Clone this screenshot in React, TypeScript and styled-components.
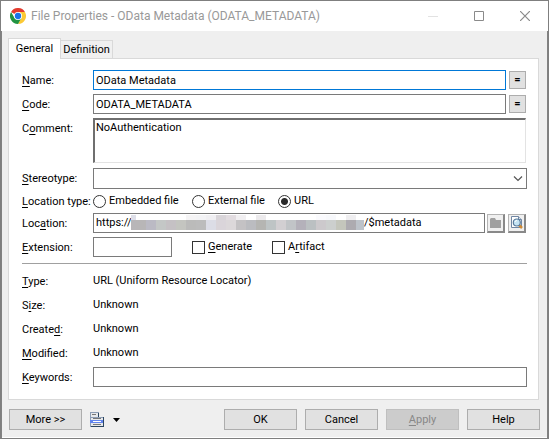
import React from "react";
import styled, { createGlobalStyle, css } from "styled-components";

const GlobalStyle = createGlobalStyle`
  *, *::before, *::after { box-sizing: border-box; }
  body { margin: 0; background: #fff; }
  body, button, input, textarea, select {
    font-family: Roboto, "Liberation Sans", sans-serif;
    font-size: 11px;
    line-height: 16px;
    color: #000;
  }
  u { text-underline-offset: 2px; text-decoration-skip-ink: none; }
`;

const Window = styled.main`
  display: flex;
  flex-direction: column;
  min-height: 100vh;
  border: 1px solid #7f7f7f;
  background: #efefef;
`;

const TitleBar = styled.header`
  display: flex;
  align-items: center;
  height: 30px;
  padding-left: 9px;
  gap: 5px;
  background: #fff;
`;

const Title = styled.h1`
  flex: 1;
  margin: 0;
  font: 400 12px/20px Roboto, "Open Sans", sans-serif;
  color: #999;
  white-space: nowrap;
`;

const CaptionButton = styled.button`
  display: grid;
  place-items: center;
  width: 46px;
  height: 28px;
  padding: 0;
  border: 0;
  background: none;
  color: #8a8a8a;
  &:disabled { color: #e2e2e2; }
`;

const CaptionButtons = styled.div`
  display: flex;
`;

const Body = styled.div`
  flex: 1;
  padding: 7px 8px 7px 6px;
  border: solid #828282;
  border-width: 0 1px;
  box-shadow: inset 0 -1px #fff;
`;

const TabList = styled.div`
  display: flex;
  align-items: flex-end;
`;

const Tab = styled.button<{ $active?: boolean }>`
  width: 52px;
  height: 18px;
  padding: 1px 0 0;
  border: 1px solid #d9d9d9;
  border-left-width: 0;
  border-bottom: 0;
  background: #f0f0f0;
  ${(p) =>
    p.$active &&
    css`
      position: relative;
      width: 53px;
      height: 21px;
      padding: 0;
      border-left-width: 1px;
      margin-bottom: -1px;
      background: #fff;
    `}
`;

const Panel = styled.form`
  padding: 11px 11px 12px 13px;
  border: 1px solid #d9d9d9;
  background: #fff;
`;

const Stack = styled.div`
  display: flex;
  flex-direction: column;
  gap: 4px;
`;

const Row = styled.div<{ $top?: boolean }>`
  display: grid;
  grid-template-columns: 71px minmax(0, 1fr);
  align-items: ${(p) => (p.$top ? "start" : "center")};
`;

const Label = styled.label<{ $lowered?: boolean }>`
  padding-top: ${(p) => (p.$lowered ? "4px" : "2px")};
  line-height: 14px;
  white-space: nowrap;
`;

const Controls = styled.div`
  display: flex;
  align-items: center;
  gap: 3px;
  padding-right: 1px;
`;

const TextInput = styled.input<{ $focused?: boolean }>`
  flex: 1;
  width: 100%;
  min-width: 0;
  height: 20px;
  padding: 0 2px;
  border: 1px solid ${(p) => (p.$focused ? "#0078d7" : "#7a7a7a")};
  background: #fff;
  outline: 0;
`;

const CommentBox = styled.textarea`
  display: block;
  flex: 1;
  height: 45px;
  padding: 0 1px;
  border: solid;
  border-width: 2px 1px 1px 2px;
  border-color: #6f6f6f #e3e3e3 #e3e3e3 #6f6f6f;
  resize: none;
  outline: 0;
`;

const EqualsButton = styled.button`
  width: 17px;
  height: 18px;
  padding: 0;
  border: 1px solid #adadad;
  background: #e1e1e1;
  font-weight: 700;
`;

const SelectBox = styled.div`
  position: relative;
  margin-top: 1px;
  svg {
    position: absolute;
    right: 4px;
    top: 8px;
    pointer-events: none;
  }
`;

const Select = styled.select`
  display: block;
  width: 100%;
  height: 21px;
  border: 1px solid #7a7a7a;
  border-radius: 0;
  background: #fff;
  appearance: none;
`;

const RadioRow = styled.div`
  display: grid;
  grid-template-columns: 99px 86px auto;
  height: 16px;
`;

const Choice = styled.label`
  display: flex;
  align-items: center;
  gap: 3px;
  white-space: nowrap;
`;

const Radio = styled.input.attrs({ type: "radio" })`
  flex: none;
  width: 13px;
  height: 13px;
  margin: 0;
  border: 1px solid #333;
  border-radius: 50%;
  appearance: none;
  &:checked { background: radial-gradient(circle, #2a2a2a 3px, #fff 4px); }
`;

const Check = styled.input.attrs({ type: "checkbox" })`
  flex: none;
  width: 13px;
  height: 13px;
  margin: 0;
  border: 1px solid #333;
  background: #fff;
  appearance: none;
`;

const LocationField = styled.div`
  display: flex;
  flex: 1;
  min-width: 0;
  height: 20px;
  border: 1px solid #7a7a7a;
  margin-right: -1px;
  svg { flex: none; }
`;

const BareInput = styled.input<{ $prefix?: boolean }>`
  flex: ${(p) => (p.$prefix ? "0 0 37px" : "1")};
  width: 0;
  min-width: 0;
  padding: 0 0 0 ${(p) => (p.$prefix ? "2px" : "0")};
  border: 0;
  outline: 0;
  background: none;
`;

const ToolButton = styled.button`
  display: grid;
  flex: none;
  place-items: center;
  width: 18px;
  height: 19px;
  padding: 0;
  border: solid;
  border-width: 1px 2px 2px 1px;
  border-color: #b4b4b4 #898989 #898989 #b4b4b4;
  background: #f0f0f0;
`;

const ExtensionRow = styled.div`
  display: grid;
  grid-template-columns: 79px 60px auto;
  column-gap: 20px;
  align-items: center;
`;

const Rule = styled.hr`
  height: 1px;
  margin: 6px 0 5px;
  border: 0;
  background: #a0a0a0;
`;

const Facts = styled.dl`
  display: grid;
  grid-template-columns: 71px 1fr;
  grid-auto-rows: 24px;
  align-items: center;
  margin: 0 0 2px;
  dt { padding-top: 2px; }
  dd { margin: 0; }
`;

const Footer = styled.footer`
  display: flex;
  align-items: center;
  gap: 8px;
  padding: 9px 0 0 1px;
  margin-right: -1px;
`;

const PushButton = styled.button`
  width: 73px;
  height: 21px;
  padding: 0;
  border: 1px solid #adadad;
  background: #e1e1e1;
  &:disabled {
    border-color: #bfbfbf;
    background: #ccc;
    color: #888;
  }
`;

const MenuButton = styled.button`
  display: flex;
  align-items: center;
  gap: 9px;
  margin-right: auto;
  padding: 0;
  border: 0;
  background: none;
`;

const ChromeIcon = () => (
  <svg width="16" height="16" viewBox="0 0 48 48" aria-hidden="true">
    <path d="M24 24 3.2 12A24 24 0 0 1 44.8 12H24z" fill="#e33b2e" />
    <path d="M24 12h20.8A24 24 0 0 1 24 48L34.4 30z" fill="#fcc934" />
    <path d="M3.2 12A24 24 0 0 0 24 48l10.4-18-20.8 0z" fill="#229342" />
    <circle cx="24" cy="24" r="12" fill="#fff" />
    <circle cx="24" cy="24" r="9.5" fill="#1a73e8" />
  </svg>
);

const FolderIcon = () => (
  <svg width="13" height="13" viewBox="0 0 13 13" aria-hidden="true">
    <path d="M1 3l1-1h4l1 2h5v8H1z" fill="#a0a0a0" />
  </svg>
);

const PreviewIcon = () => (
  <svg width="15" height="15" viewBox="0 0 15 15" aria-hidden="true">
    <path d="M2.5 1.5h7l3 3v8h-10z" fill="#fff" stroke="#7187a3" />
    <path d="M9.5 1.5v3h3" fill="#d4dfec" stroke="#7187a3" />
    <path d="M10 10l3 3" stroke="#d08b35" strokeWidth="2.5" />
    <circle cx="7.8" cy="7.5" r="3.5" fill="#c5e4f4" stroke="#587a9b" strokeWidth="1.2" />
    <path d="M6 7q.3-1.5 2-1.5" fill="none" stroke="#fff" />
  </svg>
);

const ListIcon = () => (
  <svg width="14" height="15" viewBox="0 0 14 15" shapeRendering="crispEdges" aria-hidden="true">
    <path d="M0 0h9v5h5v10H0z" fill="#8d9db5" />
    <path d="M1 1h7v4H1zM1 6h12v8H1z" fill="#e6e8eb" />
    <path d="M8 1h1v4H8zM13 5h1v10h-1zM1 14h13v1H1z" fill="#2b4560" />
    <path d="M2 2h4v1H2zM3 6h8v1H3zM3 12h8v1H3z" fill="#777" />
    <path d="M0 8h13v3H0z" fill="#6284ee" />
    <path d="M3 9h8v1H3z" fill="#fff" />
  </svg>
);

const redactedTop = [
  "#dedfe9", "", "", "", "", "", "#f5f4f5", "#f3f3f5", "#f0eff2", "#d9d5d9", "#e2dce0",
  "#f1eff1", "", "#eceaec", "", "", "", "", "", "#fafafd", "#f7f8fb", "", "#efeef0", "",
];
const redactedBottom = [
  "#b8b6b8", "#b8b6b7", "#bbbac4", "#c4c7c6", "#c5c1c4", "#c4c5c0", "#bbbbba", "#bcbcbc",
  "#dcdde6", "#dad5da", "#dcd8da", "#c4c2c4", "#bbbcc0", "#b5b5b2", "#bec4c5", "#d2cfd2",
  "#c1c4c7", "#b4b1ba", "#bbc0c2", "#ccc9cc", "#cccfce", "#c4c6bc", "#adabb0", "#bdc3ca",
];

const Redaction = () => (
  <svg width="233" height="18" viewBox="0 0 233 18" shapeRendering="crispEdges" aria-hidden="true">
    {redactedBottom.map((fill, i) => {
      const x = i === 0 ? 0 : i * 10 - 5;
      const width = i === 0 ? 5 : 10;
      return (
        <g key={i}>
          <rect x={x} y="1" width={width} height="5" fill={redactedTop[i] || "#fff"} />
          <rect x={x} y="6" width={width} height="10" fill={fill} />
        </g>
      );
    })}
  </svg>
);

export default function App() {
  return (
    <>
      <GlobalStyle />
      <Window>
        <TitleBar>
          <ChromeIcon />
          <Title>File Properties - OData Metadata (ODATA_METADATA)</Title>
          <CaptionButtons>
            <CaptionButton aria-label="Minimize" disabled>
              <svg width="10" height="10"><path d="M0 5.5h10" stroke="currentColor" /></svg>
            </CaptionButton>
            <CaptionButton aria-label="Maximize">
              <svg width="10" height="10"><path d="M.5.5h9v9h-9z" fill="none" stroke="currentColor" /></svg>
            </CaptionButton>
            <CaptionButton aria-label="Close">
              <svg width="10" height="10"><path d="M0 0l10 10M10 0L0 10" stroke="currentColor" strokeWidth="1.2" /></svg>
            </CaptionButton>
          </CaptionButtons>
        </TitleBar>
        <Body>
          <TabList role="tablist">
            <Tab role="tab" aria-selected="true" $active>General</Tab>
            <Tab role="tab" aria-selected="false">Definition</Tab>
          </TabList>
          <Panel role="tabpanel">
            <Stack>
              <Row>
                <Label htmlFor="name"><u>N</u>ame:</Label>
                <Controls>
                  <TextInput id="name" defaultValue="OData Metadata" $focused />
                  <EqualsButton type="button" aria-label="Name from code">=</EqualsButton>
                </Controls>
              </Row>
              <Row>
                <Label htmlFor="code"><u>C</u>ode:</Label>
                <Controls>
                  <TextInput id="code" defaultValue="ODATA_METADATA" />
                  <EqualsButton type="button" aria-label="Code from name">=</EqualsButton>
                </Controls>
              </Row>
              <Row $top>
                <Label htmlFor="comment" $lowered>C<u>o</u>mment:</Label>
                <Controls>
                  <CommentBox id="comment" defaultValue="NoAuthentication" />
                </Controls>
              </Row>
              <Row>
                <Label htmlFor="stereotype"><u>S</u>tereotype:</Label>
                <SelectBox>
                  <Select id="stereotype"><option value="" /></Select>
                  <svg width="10" height="6"><path d="M1 .5l4 4 4-4" fill="none" stroke="#555" strokeWidth="1.2" /></svg>
                </SelectBox>
              </Row>
              <Row role="radiogroup" aria-labelledby="loctype">
                <Label as="span" id="loctype"><u>L</u>ocation type:</Label>
                <RadioRow>
                  <Choice><Radio name="loc" />Embedded file</Choice>
                  <Choice><Radio name="loc" />External file</Choice>
                  <Choice><Radio name="loc" defaultChecked />URL</Choice>
                </RadioRow>
              </Row>
              <Row>
                <Label htmlFor="location">Loc<u>a</u>tion:</Label>
                <Controls>
                  <LocationField>
                    <BareInput id="location" defaultValue="https://" $prefix />
                    <Redaction />
                    <BareInput aria-label="Location path" defaultValue="/$metadata" />
                  </LocationField>
                  <ToolButton type="button" aria-label="Browse" disabled><FolderIcon /></ToolButton>
                  <ToolButton type="button" aria-label="Preview"><PreviewIcon /></ToolButton>
                </Controls>
              </Row>
              <Row>
                <Label htmlFor="extension"><u>E</u>xtension:</Label>
                <ExtensionRow>
                  <TextInput id="extension" />
                  <Choice><Check /><span><u>G</u>enerate</span></Choice>
                  <Choice><Check /><span>A<u>r</u>tifact</span></Choice>
                </ExtensionRow>
              </Row>
            </Stack>
            <Rule />
            <Facts>
              <dt><u>T</u>ype:</dt><dd>URL (Uniform Resource Locator)</dd>
              <dt>S<u>i</u>ze:</dt><dd>Unknown</dd>
              <dt>Create<u>d</u>:</dt><dd>Unknown</dd>
              <dt><u>M</u>odified:</dt><dd>Unknown</dd>
            </Facts>
            <Row>
              <Label htmlFor="keywords"><u>K</u>eywords:</Label>
              <TextInput id="keywords" />
            </Row>
          </Panel>
          <Footer>
            <PushButton>More &gt;&gt;</PushButton>
            <MenuButton aria-label="Report">
              <ListIcon />
              <svg width="7" height="4"><path d="M0 0h7L3.5 4z" /></svg>
            </MenuButton>
            <PushButton>OK</PushButton>
            <PushButton>Cancel</PushButton>
            <PushButton disabled><u>A</u>pply</PushButton>
            <PushButton>Help</PushButton>
          </Footer>
        </Body>
      </Window>
    </>
  );
}
